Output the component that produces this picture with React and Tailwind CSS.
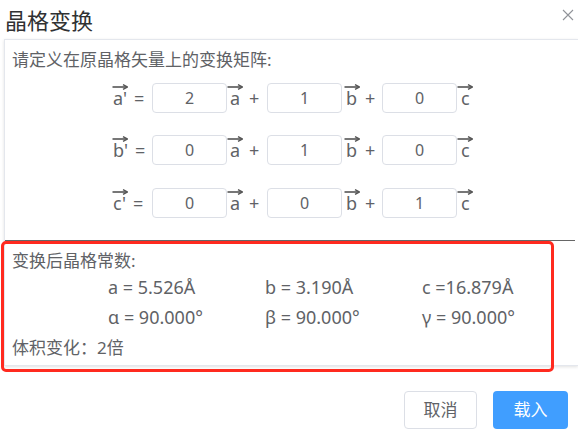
import React from "react";

const FONT = { fontFamily: '"Noto Sans", "Noto Sans CJK SC", sans-serif' };

function Arrow() {
  return (
    <svg width="16" height="6" viewBox="0 0 16 6" className="absolute left-1/2 -translate-x-1/2 top-[1px]">
      <line x1="0.5" y1="3" x2="15" y2="3" stroke="#555" strokeWidth="1.6" />
      <path d="M11 0.6 L15.3 3 L11 5.4" fill="none" stroke="#555" strokeWidth="1.4" />
    </svg>
  );
}

function Vec({ ch }) {
  return (
    <span className="relative inline-flex h-[30px] items-center px-[2px]">
      <Arrow />
      <span>{ch}</span>
    </span>
  );
}

function Box({ v }) {
  return (
    <div className="w-[75px] h-[30px] shrink-0 border border-[#dcdfe6] rounded-[4px] flex items-center justify-center text-[16px] text-[#606266]">
      {v}
    </div>
  );
}

function Row({ label, vals, className }) {
  return (
    <div className={"flex items-center h-[30px] text-[18px] text-[#606266] pl-[106px] " + className}>
      <div className="w-[41px] shrink-0 flex items-center">
        <Vec ch={label} />
        <span className="ml-[5px]">=</span>
      </div>
      <Box v={vals[0]} />
      <div className="w-[40px] shrink-0 flex items-center pl-[1px]">
        <Vec ch="a" />
        <span className="ml-[7px]">+</span>
      </div>
      <Box v={vals[1]} />
      <div className="w-[40px] shrink-0 flex items-center pl-[2px]">
        <Vec ch="b" />
        <span className="ml-[6px]">+</span>
      </div>
      <Box v={vals[2]} />
      <div className="flex items-center pl-[2px]">
        <Vec ch="c" />
      </div>
    </div>
  );
}

export default function App() {
  return (
    <div className="relative w-[578px] h-[441px] bg-white overflow-hidden" style={FONT}>
      <div className="h-[39px] flex items-center justify-between pl-[5px] pr-[4px]">
        <span className="text-[22px] text-[#303133] leading-none">晶格变换</span>
        <svg width="12" height="12" viewBox="0 0 12 12" className="mb-[10px]">
          <path d="M1 1 L11 11 M11 1 L1 11" stroke="#909399" strokeWidth="1.1" />
        </svg>
      </div>

      <div className="ml-[4px] border-t border-l border-b border-[#e4e7ed] shadow-[0_1px_3px_rgba(0,0,0,0.12)]">
        <div className="border-b border-[#666] mr-[3px] pb-[22px]">
          <div className="pt-[8px] pl-[7px] leading-[24px] text-[17px] text-[#606266]">请定义在原晶格矢量上的变换矩阵:</div>
          <Row label="a'" vals={["2", "1", "0"]} className="mt-[11px]" />
          <Row label="b'" vals={["0", "1", "0"]} className="mt-[22px]" />
          <Row label="c'" vals={["0", "0", "1"]} className="mt-[23px]" />
        </div>
        <div className="pt-[9px] pb-[5px] pl-[7px] text-[#606266]">
          <div className="h-[22px] leading-[22px] text-[17px]">变换后晶格常数:</div>
          <div className="grid grid-cols-[157px_157px_auto] pl-[96px] text-[18px]">
            <div className="h-[30px] leading-[30px]">a = 5.526Å</div>
            <div className="h-[30px] leading-[30px]">b = 3.190Å</div>
            <div className="h-[30px] leading-[30px]">c =16.879Å</div>
            <div className="h-[30px] leading-[30px]">α = 90.000°</div>
            <div className="h-[30px] leading-[30px]">β = 90.000°</div>
            <div className="h-[30px] leading-[30px]">γ = 90.000°</div>
          </div>
          <div className="mt-[4px] h-[24px] leading-[24px] text-[17px]">体积变化：2倍</div>
        </div>
      </div>

      <div className="flex justify-end gap-[16px] pr-[10px] pt-[25px]">
        <button className="w-[73px] h-[38px] border border-[#dcdfe6] rounded-[4px] bg-white text-[17px] text-[#606266]">取消</button>
        <button className="w-[75px] h-[38px] rounded-[4px] bg-[#409eff] text-[17px] text-white">载入</button>
      </div>

      <div className="absolute left-[1px] top-[241px] w-[553px] h-[131px] border-[3px] border-[#ff2a1f] rounded-[5px] pointer-events-none" />
    </div>
  );
}
